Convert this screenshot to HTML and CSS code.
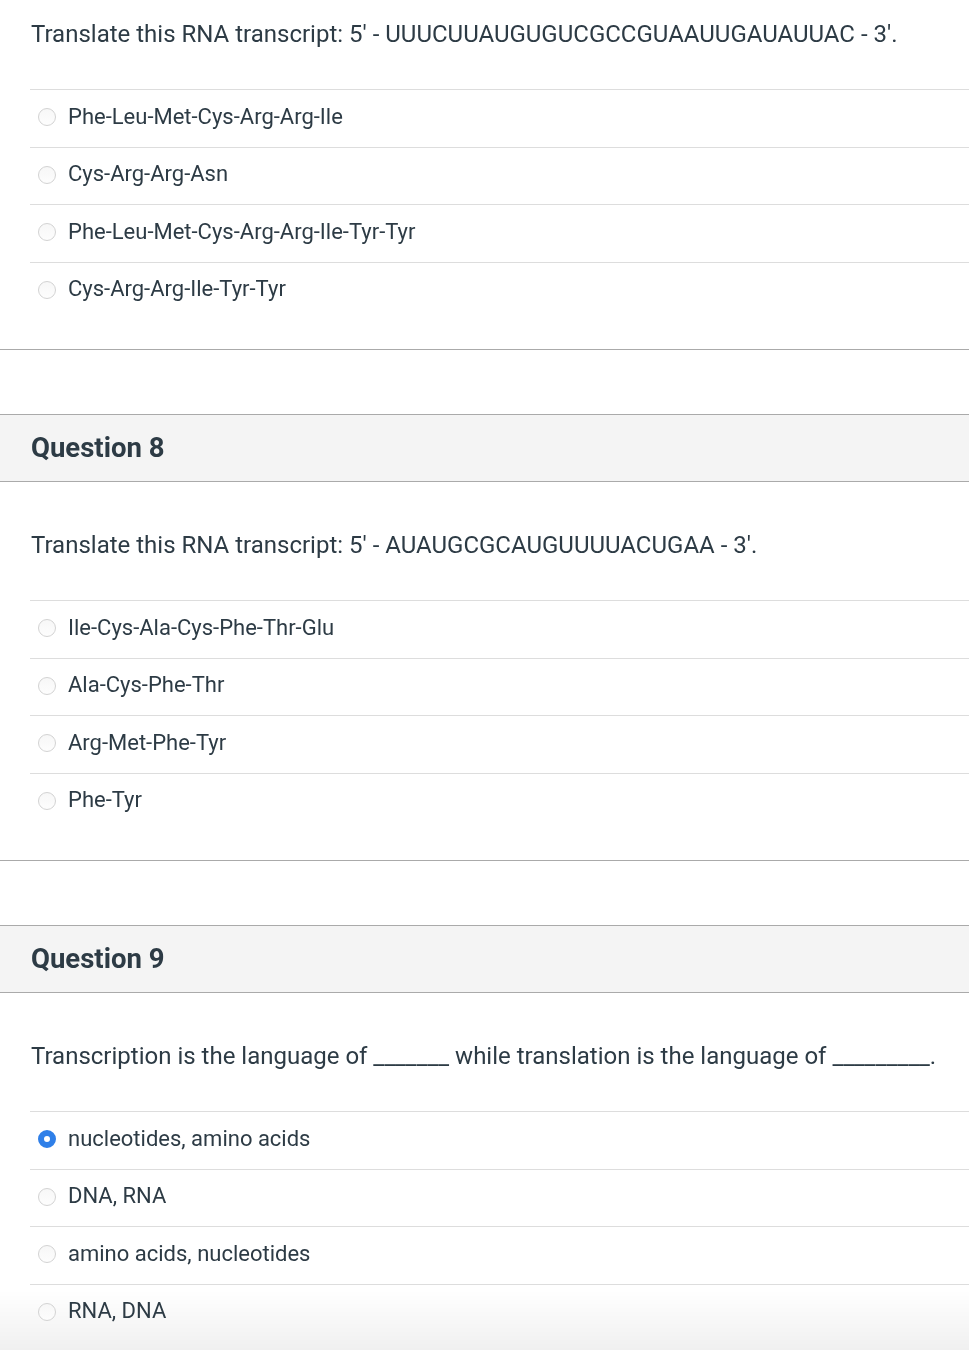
FILE: index.html
```html
<!DOCTYPE html>
<html lang="en">
<head>
<meta charset="utf-8">
<title>Quiz</title>
<link rel="stylesheet" href="styles.css">
</head>
<body>
<div class="quiz">
  <section class="question first">
    <div class="q-body">
      <p class="q-text">Translate this RNA transcript: 5' - UUUCUUAUGUGUCGCCGUAAUUGAUAUUAC - 3'.</p>
      <ul class="answers">
        <li class="answer"><span class="radio"></span><span>Phe-Leu-Met-Cys-Arg-Arg-Ile</span></li>
        <li class="answer"><span class="radio"></span><span>Cys-Arg-Arg-Asn</span></li>
        <li class="answer"><span class="radio"></span><span>Phe-Leu-Met-Cys-Arg-Arg-Ile-Tyr-Tyr</span></li>
        <li class="answer"><span class="radio"></span><span>Cys-Arg-Arg-Ile-Tyr-Tyr</span></li>
      </ul>
    </div>
  </section>

  <section class="question">
    <header class="q-header"><h2 class="q-title">Question 8</h2></header>
    <div class="q-body">
      <p class="q-text">Translate this RNA transcript: 5' - AUAUGCGCAUGUUUUACUGAA - 3'.</p>
      <ul class="answers">
        <li class="answer"><span class="radio"></span><span>Ile-Cys-Ala-Cys-Phe-Thr-Glu</span></li>
        <li class="answer"><span class="radio"></span><span>Ala-Cys-Phe-Thr</span></li>
        <li class="answer"><span class="radio"></span><span>Arg-Met-Phe-Tyr</span></li>
        <li class="answer"><span class="radio"></span><span>Phe-Tyr</span></li>
      </ul>
    </div>
  </section>

  <section class="question">
    <header class="q-header"><h2 class="q-title">Question 9</h2></header>
    <div class="q-body">
      <p class="q-text">Transcription is the language of _______ while translation is the language of _________.</p>
      <ul class="answers">
        <li class="answer"><span class="radio checked"></span><span>nucleotides, amino acids</span></li>
        <li class="answer"><span class="radio"></span><span>DNA, RNA</span></li>
        <li class="answer"><span class="radio"></span><span>amino acids, nucleotides</span></li>
        <li class="answer"><span class="radio"></span><span>RNA, DNA</span></li>
      </ul>
    </div>
  </section>
</div>
<div class="bottom-fade"></div>
</body>
</html>
```

FILE: styles.css
```css
html {
  background: #ffffff;
}

html, body {
  margin: 0;
  padding: 0;
}

body {
  font-family: Roboto, "Liberation Sans", Arial, sans-serif;
  color: #2d3b45;
  overflow: hidden;
}

.quiz {
  display: flex;
  flex-direction: column;
  gap: 64px;
}

.question {
  border-bottom: 1px solid #aaaaaa;
}

.q-header {
  background: #f4f4f4;
  border-top: 1px solid #aaaaaa;
  border-bottom: 1px solid #aaaaaa;
  padding: 0 31px;
  height: 66px;
  display: flex;
  align-items: center;
}

.q-title {
  margin: 0;
  font-size: 27.5px;
  font-weight: 700;
  line-height: 30px;
}

.q-body {
  padding: 49px 0 30px 30px;
}

.question.first .q-body {
  padding-top: 20px;
}

.q-text {
  margin: 0 0 41px 1px;
  font-size: 24px;
  line-height: 28px;
}

.answers {
  list-style: none;
  margin: 0;
  padding: 0;
}

.answer {
  display: flex;
  align-items: center;
  gap: 12px;
  border-top: 1px solid #dddddd;
  padding: 12.5px 0 15.5px 8px;
  line-height: 28.5px;
  font-size: 22px;
}

.radio {
  width: 18px;
  height: 18px;
  border-radius: 50%;
  border: 1.5px solid #d2d2d2;
  background: linear-gradient(#f7f7f7, #fdfdfd);
  flex: none;
  box-sizing: border-box;
  margin-top: 1px;
}

.radio.checked {
  border: 6px solid #2f7fe8;
  background: #ffffff;
}

.bottom-fade {
  position: fixed;
  left: 0;
  right: 0;
  bottom: 0;
  height: 60px;
  z-index: -1;
  background: linear-gradient(rgba(242, 242, 242, 0), #f0f0f0);
  pointer-events: none;
}
```
